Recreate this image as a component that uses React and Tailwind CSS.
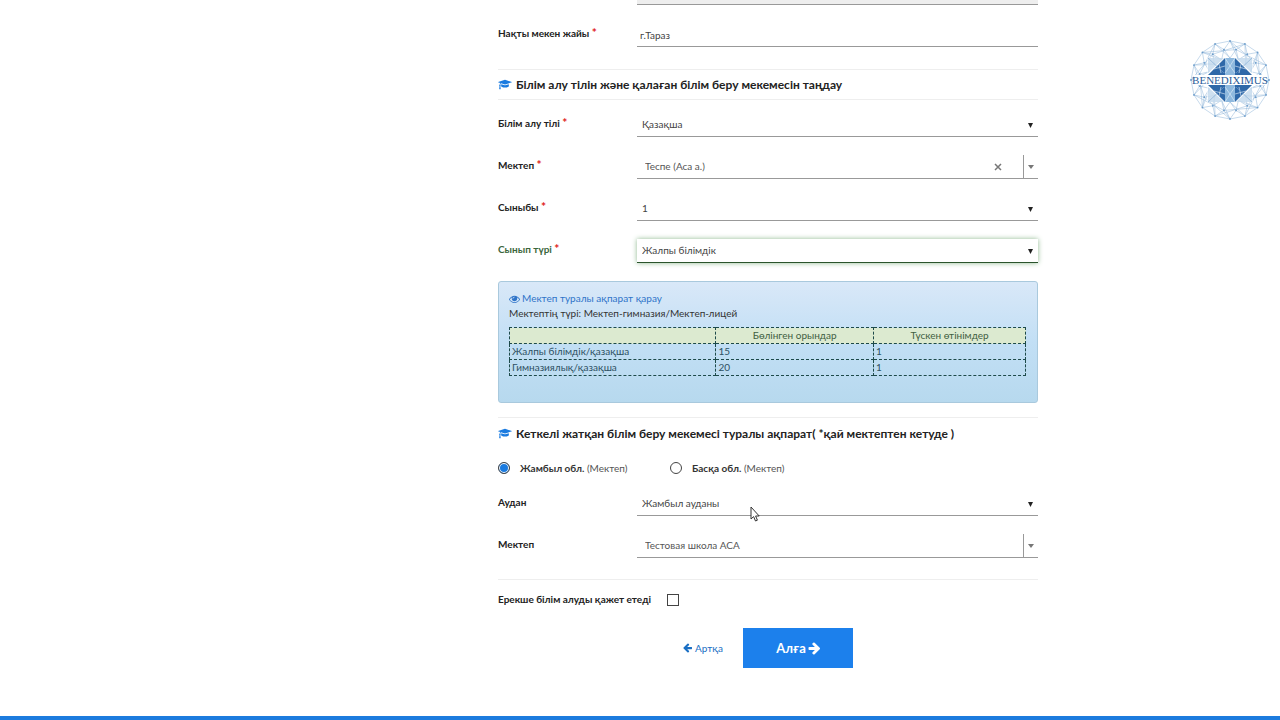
import React, { useState } from 'react';

function GraduationCap() {
  return (
    <svg viewBox="0 0 2304 1792" className="w-[14px] h-[11px] shrink-0 fill-[#1a7be0]" aria-hidden="true">
      <path d="M1774 836l18 316q4 69-82 128t-235 93.5-323 34.5-323-34.5-235-93.5-82-128l18-316 574 181q22 7 48 7t48-7zm530-324q0 23-22 31l-1120 352q-4 1-10 1t-10-1l-652-206q-43 34-71 111.5t-34 178.5q63 36 63 109 0 69-58 107l58 433q2 14-8 25-9 11-24 11h-192q-15 0-24-11-10-11-8-25l58-433q-58-38-58-107 0-73 65-111 11-207 98-330l-333-104q-22-8-22-31t22-31l1120-352q4-1 10-1t10 1l1120 352q22 8 22 31z" />
    </svg>
  );
}

function Eye() {
  return (
    <svg viewBox="0 128 1792 1536" className="w-[11px] h-[10px] fill-current" aria-hidden="true">
      <path d="M1664 960q-152-236-381-353 61 104 61 225 0 185-131.5 316.5t-316.5 131.5-316.5-131.5-131.5-316.5q0-121 61-225-229 117-381 353 133 205 333.5 326.5t434.5 121.5 434.5-121.5 333.5-326.5zm-720-384q0-20-14-34t-34-14q-125 0-214.5 89.5t-89.5 214.5q0 20 14 34t34 14 34-14 14-34q0-86 61-147t147-61q20 0 34-14t14-34zm848 384q0 34-20 69-140 230-376.5 368.5t-499.5 138.5-499.5-139-376.5-368q-20-35-20-69t20-69q140-229 376.5-368t499.5-139 499.5 139 376.5 368q20 35 20 69z" />
    </svg>
  );
}

function ArrowLeft() {
  return (
    <svg viewBox="0 128 1536 1664" className="w-[9px] h-[10px] fill-current" aria-hidden="true">
      <path d="M1536 896v128q0 53-32.5 90.5t-84.5 37.5h-704l293 294q38 36 38 90t-38 90l-75 76q-37 37-90 37-52 0-91-37l-651-652q-37-37-37-90 0-52 37-91l651-650q38-38 91-38 52 0 90 38l75 74q38 38 38 91t-38 91l-293 293h704q52 0 84.5 37.5t32.5 90.5z" />
    </svg>
  );
}

function ArrowRight() {
  return (
    <svg viewBox="64 128 1536 1664" className="w-[12px] h-[13px] fill-current" aria-hidden="true">
      <path d="M1600 960q0 54-37 91l-651 651q-39 37-91 37-51 0-90-37l-75-75q-38-38-38-91t38-91l293-293h-704q-52 0-84.5-37.5t-32.5-90.5v-128q0-53 32.5-90.5t84.5-37.5h704l-293-294q-38-36-38-90t38-90l75-75q38-38 90-38 53 0 91 38l651 651q37 35 37 90z" />
    </svg>
  );
}

function Cursor() {
  return (
    <svg viewBox="0 0 10 16" className="absolute left-[113px] top-[14px] w-[10px] h-[16px] pointer-events-none" aria-hidden="true">
      <path d="M1 1V13L3.6 10.6L5.5 15L7.4 14.2L5.6 10H9.2Z" fill="#fff" stroke="#333" strokeWidth="1" />
    </svg>
  );
}

const N = 16;
const ring = (radius, shift = 0) =>
  Array.from({ length: N }, (_, i) => {
    const a = ((i + shift) / N) * Math.PI * 2 - Math.PI / 2;
    return [40 + radius * Math.cos(a), 40 + radius * Math.sin(a)];
  });
const outer = ring(39);
const middle = ring(31, 0.5);
const inner = ring(22);
const line = (a, b) => `M${a[0]} ${a[1]}L${b[0]} ${b[1]}`;
const net = outer
  .map((p, i) => {
    const n = (i + 1) % N;
    return [
      line(p, outer[n]),
      line(p, middle[i]),
      line(outer[n], middle[i]),
      line(middle[i], inner[i]),
      line(middle[i], inner[n]),
      i % 2 === 0 ? line(p, middle[(i + 2) % N]) : line(p, middle[(i + N - 3) % N]),
      line(p, inner[n]),
    ].join('');
  })
  .join('');

function Logo() {
  return (
    <svg viewBox="0 0 80 80" className="absolute right-[10px] top-[40px] w-[80px] h-[80px]" role="img" aria-label="Benediximus">
      <path d={net} fill="none" stroke="#8fb4d8" strokeWidth="0.5" />
      {[...outer, ...middle].map(([x, y]) => (
        <circle key={`${x}-${y}`} cx={x} cy={y} r="0.9" fill="#6d9dcb" />
      ))}
      <path d="M17 18H63V62H17Z" fill="#fff" fillOpacity="0.5" />
      <path d="M18 18H34L18 33ZM62 18H46L62 33ZM18 62H34L18 47ZM62 62H46L62 47Z" fill="#b9d3ea" fillOpacity="0.7" />
      <path d="M35 18V35H18ZM45 18V35H62ZM35 62V45H18ZM45 62V45H62Z" fill="#2f68a8" />
      <path d="M35 18H45V35H35ZM35 45H45V62H35Z" fill="#8fb9de" />
      <path d="M35 18L40 26L45 18M35 33L40 26L45 33M35 47L40 54L45 47M35 62L40 54L45 62M24 29L35 26M56 29L45 26M24 51L35 54M56 51L45 54M29 24L31 33M51 24L49 33M29 56L31 47M51 56L49 47" fill="none" stroke="#e8f2fb" strokeWidth="0.6" />
      <path d="M18 18L34 33M62 18L46 33M18 62L34 47M62 62L46 47" fill="none" stroke="#7ba6d0" strokeWidth="0.6" />
      <path d="M4 35H76V45H4Z" fill="#fff" />
      <text x="40" y="44" textAnchor="middle" fontFamily="Liberation Serif, serif" fontSize="11" fill="#2c5c98">BENEDIXIMUS</text>
    </svg>
  );
}

function Row({ id, label, required, valid, children }) {
  return (
    <div className="flex h-[24px]">
      <label htmlFor={id} className={`w-[139px] shrink-0 leading-[20px] font-bold ${valid ? 'text-[#3b663c]' : 'text-[#222]'}`}>
        {label} {required && <span className="text-[12px] leading-none text-[#e02020]">*</span>}
      </label>
      <div className="relative flex-1">{children}</div>
    </div>
  );
}

function Select({ id, value, valid }) {
  return (
    <>
      <select
        id={id}
        defaultValue={value}
        className={`w-full h-full appearance-none bg-white pl-[5px] pr-6 text-[#444] outline-none border-b ${valid ? 'border-[#2b542c] shadow-[0_0_5px_#8fb890]' : 'border-[#999]'}`}
      >
        <option>{value}</option>
      </select>
      <svg viewBox="0 0 5 5" className="absolute right-[5px] top-[10px] w-[5px] h-[5px] fill-[#222] pointer-events-none" aria-hidden="true">
        <path d="M0 0H5L2.5 5Z" />
      </svg>
    </>
  );
}

function Combo({ id, value, clearable }) {
  return (
    <div className="flex h-full border-b border-[#999]">
      <select id={id} defaultValue={value} className="flex-1 appearance-none bg-white pl-2 text-[#555] outline-none">
        <option>{value}</option>
      </select>
      {clearable && (
        <button type="button" aria-label="Тазалау" className="w-[10px] mr-[20px] flex items-center justify-center text-[#777]">
          <svg viewBox="0 0 8 8" className="w-[8px] h-[8px]" aria-hidden="true">
            <path d="M1 1L7 7M7 1L1 7" fill="none" stroke="currentColor" strokeWidth="1.5" />
          </svg>
        </button>
      )}
      <span className="w-[15px] flex items-center justify-center border-l border-[#999]">
        <svg viewBox="0 0 6 4" className="w-[6px] h-[4px] fill-[#777]" aria-hidden="true">
          <path d="M0 0H6L3 4Z" />
        </svg>
      </span>
    </div>
  );
}

function RegionRadio({ value, name, checked, onChange }) {
  return (
    <label className="flex items-center w-[172px] font-bold text-[#333]">
      <input
        type="radio"
        name="region"
        value={value}
        checked={checked}
        onChange={onChange}
        className="appearance-none w-[12px] h-[12px] mr-[10px] rounded-full border border-[#444] bg-white checked:bg-[#1a7be0] checked:shadow-[inset_0_0_0_1px_#fff]"
      />
      <span>{name} <span className="font-normal text-[#555]">(Мектеп)</span></span>
    </label>
  );
}

const places = [
  { name: 'Жалпы білімдік/қазақша', total: 15, applied: 1 },
  { name: 'Гимназиялық/қазақша', total: 20, applied: 1 },
];

export default function App() {
  const [region, setRegion] = useState('zhambyl');
  const [special, setSpecial] = useState(false);

  return (
    <div className="relative min-h-screen flex flex-col bg-white font-['Lato',sans-serif] text-[10px] leading-[15px] text-[#333]">
      <Logo />
      <main className="flex-1 grid grid-cols-[498fr_540fr_242fr]">
        <form className="col-start-2 min-w-0" onSubmit={(e) => e.preventDefault()}>
          <div className="h-[5px] ml-[139px] bg-[#eee] border-b border-[#999]" />
          <div className="pt-[18px] pb-[22px]">
            <Row id="address" label="Нақты мекен жайы" required>
              <input id="address" type="text" defaultValue="г.Тараз" className="w-full h-full px-[3px] text-[#444] border-b border-[#999] outline-none" />
            </Row>
          </div>

          <h2 className="flex items-center gap-1 h-[31px] border-y border-[#eee] text-[12px] font-bold text-[#222]">
            <GraduationCap />
            Білім алу тілін және қалаған білім беру мекемесін таңдау
          </h2>
          <div className="flex flex-col gap-[18px] pt-[13px]">
            <Row id="language" label="Білім алу тілі" required>
              <Select id="language" value="Қазақша" />
            </Row>
            <Row id="school" label="Мектеп" required>
              <Combo id="school" value="Теспе (Аса а.)" clearable />
            </Row>
            <Row id="grade" label="Сыныбы" required>
              <Select id="grade" value="1" />
            </Row>
            <Row id="kind" label="Сынып түрі" required valid>
              <Select id="kind" value="Жалпы білімдік" valid />
            </Row>

            <div className="h-[122px] rounded-[3px] border border-[#a9c9dd] bg-linear-to-b from-[#d9e8f8] via-[#c2dff5] to-[#b7d9ee] pl-[10px] pr-[11px] pt-[9px]">
              <a href="#school-info" className="flex items-center gap-[2px] text-[#2f74c9]">
                <Eye /> Мектеп туралы ақпарат қарау
              </a>
              <p>Мектептің түрі: Мектеп-гимназия/Мектеп-лицей</p>
              <table className="w-full mt-[6px] table-fixed border-collapse text-[#2d5062] [&_td]:border [&_td]:border-dashed [&_td]:border-[#1d4a4a] [&_th]:border [&_th]:border-dashed [&_th]:border-[#1d4a4a] [&_td]:h-[16px] [&_th]:h-[16px] [&_td]:px-[2px] [&_td]:py-0">
                <thead>
                  <tr className="bg-[#dcead0] text-[#3f6042]">
                    <th className="w-[40%]" />
                    <th className="font-normal">Бөлінген орындар</th>
                    <th className="w-[152px] font-normal">Түскен өтінімдер</th>
                  </tr>
                </thead>
                <tbody>
                  {places.map((p) => (
                    <tr key={p.name}>
                      <td>{p.name}</td>
                      <td>{p.total}</td>
                      <td>{p.applied}</td>
                    </tr>
                  ))}
                </tbody>
              </table>
            </div>
          </div>

          <h2 className="flex items-center gap-1 h-[31px] mt-[14px] border-t border-[#eee] text-[12px] font-bold text-[#222]">
            <GraduationCap />
            Кеткелі жатқан білім беру мекемесі туралы ақпарат( *қай мектептен кетуде )
          </h2>
          <div className="flex items-center h-10 mb-1">
            <RegionRadio value="zhambyl" name="Жамбыл обл." checked={region === 'zhambyl'} onChange={() => setRegion('zhambyl')} />
            <RegionRadio value="other" name="Басқа обл." checked={region === 'other'} onChange={() => setRegion('other')} />
          </div>
          <div className="flex flex-col gap-[18px]">
            <Row id="district" label="Аудан">
              <Select id="district" value="Жамбыл ауданы" />
              <Cursor />
            </Row>
            <Row id="prev-school" label="Мектеп">
              <Combo id="prev-school" value="Тестовая школа АСА" />
            </Row>
          </div>

          <div className="flex items-center h-[40px] mt-[21px] border-t border-[#eee]">
            <label htmlFor="special" className="font-bold text-[#222]">Ерекше білім алуды қажет етеді</label>
            <input
              id="special"
              type="checkbox"
              checked={special}
              onChange={(e) => setSpecial(e.target.checked)}
              className="appearance-none w-[12px] h-[12px] ml-4 border border-[#444] bg-white checked:bg-[#1a7be0]"
            />
          </div>
          <div className="flex items-center justify-center gap-5 h-[40px] mt-[9px]">
            <a href="#back" className="flex items-center gap-[3px] text-[#1a6fc4]">
              <ArrowLeft /> Артқа
            </a>
            <button type="submit" className="flex items-center justify-center gap-[2px] w-[110px] h-full bg-[#1c80ec] text-[13px] font-bold text-white">
              Алға <ArrowRight />
            </button>
          </div>
        </form>
      </main>
      <footer className="h-[4px] bg-[#1c7bde]" />
    </div>
  );
}
